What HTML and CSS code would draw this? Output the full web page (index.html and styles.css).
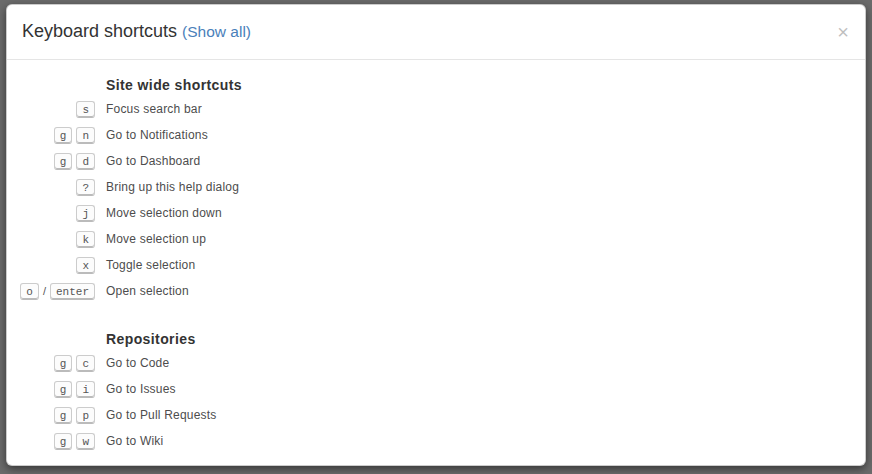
FILE: index.html
```html
<!DOCTYPE html>
<html lang="en">
<head>
  <meta charset="UTF-8" />
  <title>Keyboard shortcuts</title>
  <link rel="stylesheet" href="styles.css">
</head>
<body>
  <div class="backdrop">
    <div class="modal">
      <div class="modal-header">
        <h4 class="modal-title">Keyboard shortcuts <a href="#" class="show-all">(Show all)</a></h4>
        <button class="close" type="button">&times;</button>
      </div>

      <div class="modal-body">
        <!-- Site wide -->
        <section class="shortcut-group">
          <h5>Site wide shortcuts</h5>
          <ul class="shortcut-list">
            <li><span class="keys"><kbd>s</kbd></span><span class="desc">Focus search bar</span></li>
            <li><span class="keys"><kbd>g</kbd><kbd>n</kbd></span><span class="desc">Go to Notifications</span></li>
            <li><span class="keys"><kbd>g</kbd><kbd>d</kbd></span><span class="desc">Go to Dashboard</span></li>
            <li><span class="keys"><kbd>?</kbd></span><span class="desc">Bring up this help dialog</span></li>
            <li><span class="keys"><kbd>j</kbd></span><span class="desc">Move selection down</span></li>
            <li><span class="keys"><kbd>k</kbd></span><span class="desc">Move selection up</span></li>
            <li><span class="keys"><kbd>x</kbd></span><span class="desc">Toggle selection</span></li>
            <li><span class="keys"><kbd>o</kbd><span class="or">/</span><kbd>enter</kbd></span><span class="desc">Open selection</span></li>
          </ul>
        </section>

        <!-- Repositories -->
        <section class="shortcut-group">
          <h5>Repositories</h5>
          <ul class="shortcut-list">
            <li><span class="keys"><kbd>g</kbd><kbd>c</kbd></span><span class="desc">Go to Code</span></li>
            <li><span class="keys"><kbd>g</kbd><kbd>i</kbd></span><span class="desc">Go to Issues</span></li>
            <li><span class="keys"><kbd>g</kbd><kbd>p</kbd></span><span class="desc">Go to Pull Requests</span></li>
            <li><span class="keys"><kbd>g</kbd><kbd>w</kbd></span><span class="desc">Go to Wiki</span></li>
          </ul>
        </section>
      </div>
    </div>
  </div>
</body>
</html>
```

FILE: styles.css
```css
html, body {
  margin: 0;
  padding: 0;
  height: 100%;
  overflow: hidden;
}

body {
  font-family: "Liberation Sans", Arial, sans-serif;
  background-color: #6b6b6b;
}

.backdrop {
  padding: 4px 6px;
}

.modal {
  width: 860px;
  height: 462px;
  box-sizing: border-box;
  background: #fff;
  border: 1px solid rgba(0,0,0,0.2);
  border-radius: 6px;
  box-shadow: 0 3px 9px rgba(0,0,0,0.5);
  overflow: hidden;
}

.modal-header {
  display: flex;
  align-items: center;
  justify-content: space-between;
  padding: 14px 15px 15px 15px;
  border-bottom: 1px solid #e5e5e5;
}

.modal-title {
  margin: 0;
  font-size: 18px;
  font-weight: normal;
  line-height: 25px;
  color: #333;
}

.show-all {
  font-size: 15.5px;
  color: #4a80ba;
  text-decoration: none;
}

.close {
  padding: 0;
  margin-right: 1px;
  border: none;
  background: none;
  font-family: "Liberation Sans", Arial, sans-serif;
  font-size: 20px;
  font-weight: normal;
  line-height: 1;
  color: #000;
  opacity: 0.25;
  cursor: pointer;
}

.modal-body {
  padding: 15px 14px;
}

.shortcut-group + .shortcut-group {
  margin-top: 25px;
}

.shortcut-group h5 {
  margin: 0 0 1px 85px;
  font-size: 14px;
  font-weight: bold;
  line-height: 20px;
  letter-spacing: 0.4px;
  color: #333;
}

.shortcut-list {
  list-style: none;
  margin: 0;
  padding: 0;
}

.shortcut-list li {
  display: grid;
  grid-template-columns: 74px 1fr;
  column-gap: 11px;
  align-items: center;
  height: 26px;
}

.keys {
  display: flex;
  justify-content: flex-end;
  align-items: center;
  gap: 4px;
}

.or {
  font-size: 11px;
  color: #555;
}

kbd {
  display: inline-block;
  padding: 3px 5px 2px;
  font: 11px "Liberation Mono", Consolas, monospace;
  line-height: 10px;
  color: #555;
  background-color: #fcfcfc;
  border: 1px solid #ccc;
  border-bottom-color: #bbb;
  border-radius: 3px;
  box-shadow: inset 0 -1px 0 #bbb;
}

.desc {
  font-size: 12px;
  letter-spacing: 0.2px;
  color: #4d4d4d;
}
```
